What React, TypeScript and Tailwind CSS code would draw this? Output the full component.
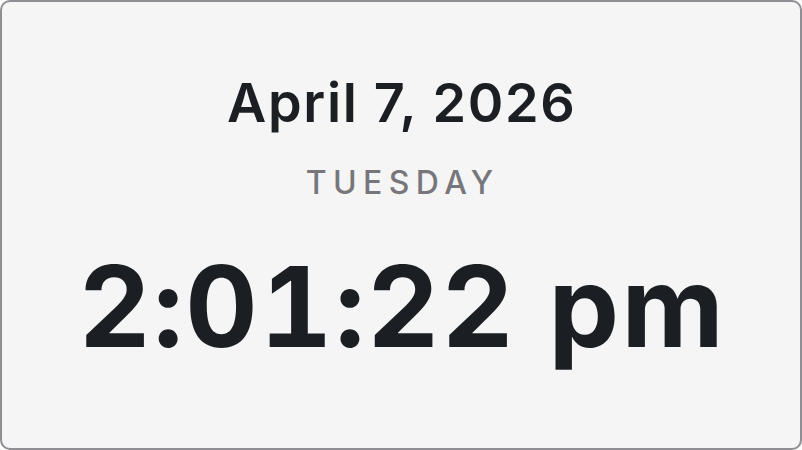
export default function App() {
  return (
    <div className="w-[802px] h-[450px] bg-white">
      <div className="w-full h-full box-border border-2 border-[#8e8e93] rounded-[10px] bg-[#f5f5f5] flex flex-col items-center pt-[74px] font-['Inter','Noto_Sans',sans-serif]">
        <div className="text-[54px] leading-[54px] font-semibold text-[#1b1e23] tracking-[0.03em] pl-[0.03em]">
          April 7, 2026
        </div>
        <div className="mt-[37px] text-[32px] leading-[32px] font-medium text-[#77777b] tracking-[0.2em] pl-[0.1em]">
          TUESDAY
        </div>
        <div className="mt-[51px] text-[112px] leading-[112px] font-bold text-[#1b1e23] tabular-nums tracking-[0.02em] pl-[0.02em]">
          2:01:22 pm
        </div>
      </div>
    </div>
  );
}
